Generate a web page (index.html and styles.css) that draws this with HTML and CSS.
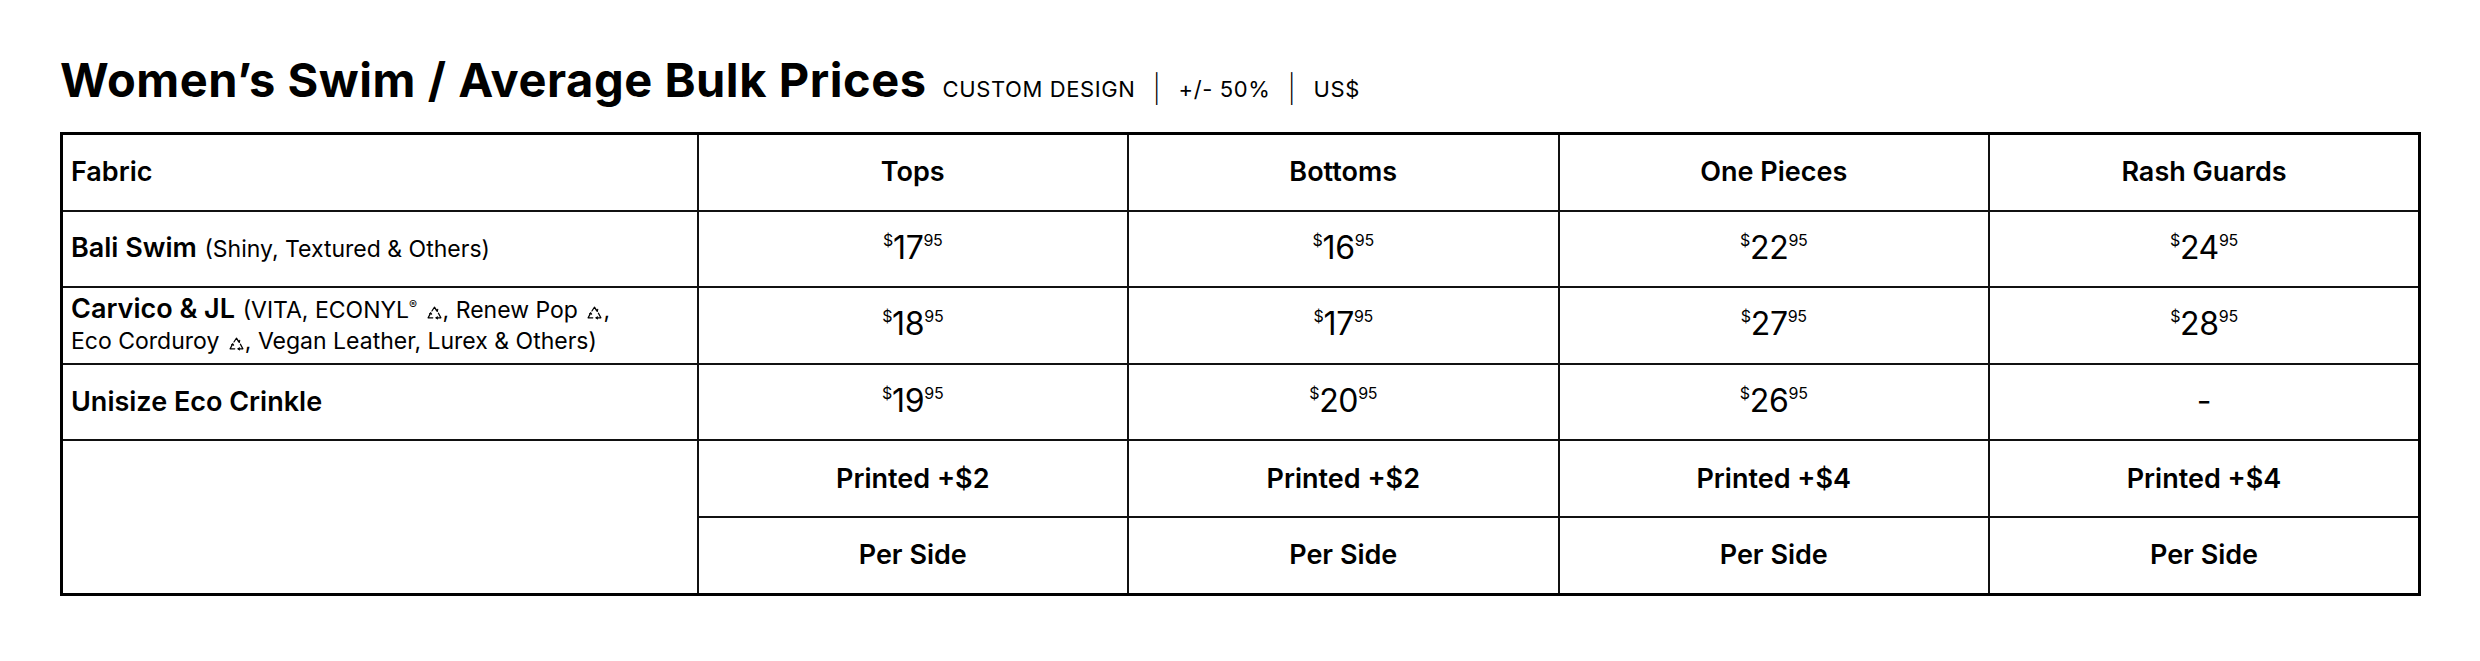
FILE: index.html
```html
<!DOCTYPE html>
<html lang="en">
<head>
<meta charset="utf-8">
<title>Women's Swim / Average Bulk Prices</title>
<link rel="stylesheet" href="styles.css">
</head>
<body>
<main class="page">
  <header class="heading">
    <h1 class="title">Women’s Swim / Average Bulk Prices</h1>
    <p class="meta">CUSTOM DESIGN <span class="sep">|</span> +/- 50% <span class="sep">|</span> US$</p>
  </header>
  <table class="prices">
    <colgroup>
      <col class="c-fabric">
      <col class="c-item">
      <col class="c-item">
      <col class="c-item">
      <col class="c-item">
    </colgroup>
    <thead>
      <tr>
        <th class="fabric">Fabric</th>
        <th>Tops</th>
        <th>Bottoms</th>
        <th>One Pieces</th>
        <th>Rash Guards</th>
      </tr>
    </thead>
    <tbody>
      <tr>
        <td class="fabric"><b>Bali Swim</b> <span class="note">(Shiny, Textured &amp; Others)</span></td>
        <td><span class="price"><sup>$</sup>17<sup>95</sup></span></td>
        <td><span class="price"><sup>$</sup>16<sup>95</sup></span></td>
        <td><span class="price"><sup>$</sup>22<sup>95</sup></span></td>
        <td><span class="price"><sup>$</sup>24<sup>95</sup></span></td>
      </tr>
      <tr>
        <td class="fabric"><b>Carvico &amp; JL</b> <span class="note">(VITA, ECONYL<sup class="reg">®</sup> <svg class="rec" viewBox="0 0 14 12" aria-hidden="true"><path d="M4.6 4.6 L7 1 L9.4 4.6 M10.6 6.6 L13 11 L8.6 11 M5.4 11 L1 11 L3.4 6.6"/><path d="M8.2 3.4 L9.6 4.9 L10 3 M9.8 11.9 L8.4 11 L9.8 10.1 M2.4 7.4 L3.4 6.4 L4.3 7.6"/></svg>, Renew Pop <svg class="rec" viewBox="0 0 14 12" aria-hidden="true"><path d="M4.6 4.6 L7 1 L9.4 4.6 M10.6 6.6 L13 11 L8.6 11 M5.4 11 L1 11 L3.4 6.6"/><path d="M8.2 3.4 L9.6 4.9 L10 3 M9.8 11.9 L8.4 11 L9.8 10.1 M2.4 7.4 L3.4 6.4 L4.3 7.6"/></svg>,<br>Eco Corduroy <svg class="rec" viewBox="0 0 14 12" aria-hidden="true"><path d="M4.6 4.6 L7 1 L9.4 4.6 M10.6 6.6 L13 11 L8.6 11 M5.4 11 L1 11 L3.4 6.6"/><path d="M8.2 3.4 L9.6 4.9 L10 3 M9.8 11.9 L8.4 11 L9.8 10.1 M2.4 7.4 L3.4 6.4 L4.3 7.6"/></svg>, Vegan Leather, Lurex &amp; Others)</span></td>
        <td><span class="price"><sup>$</sup>18<sup>95</sup></span></td>
        <td><span class="price"><sup>$</sup>17<sup>95</sup></span></td>
        <td><span class="price"><sup>$</sup>27<sup>95</sup></span></td>
        <td><span class="price"><sup>$</sup>28<sup>95</sup></span></td>
      </tr>
      <tr>
        <td class="fabric"><b>Unisize Eco Crinkle</b></td>
        <td><span class="price"><sup>$</sup>19<sup>95</sup></span></td>
        <td><span class="price"><sup>$</sup>20<sup>95</sup></span></td>
        <td><span class="price"><sup>$</sup>26<sup>95</sup></span></td>
        <td><span class="price">-</span></td>
      </tr>
      <tr class="strong">
        <td class="fabric" rowspan="2"></td>
        <td>Printed +$2</td>
        <td>Printed +$2</td>
        <td>Printed +$4</td>
        <td>Printed +$4</td>
      </tr>
      <tr class="strong">
        <td>Per Side</td>
        <td>Per Side</td>
        <td>Per Side</td>
        <td>Per Side</td>
      </tr>
    </tbody>
  </table>
</main>
</body>
</html>
```

FILE: styles.css
```css
html, body {
  margin: 0;
  padding: 0;
  background: #ffffff;
  color: #000000;
  font-family: Inter, "Liberation Sans", Arial, sans-serif;
}

.page {
  padding: 52px 0 0 60px;
}

.heading {
  display: flex;
  align-items: baseline;
  gap: 16px;
  margin: 0 0 24px 0;
}

.title {
  margin: 0;
  font-size: 47px;
  line-height: 56px;
  font-weight: 700;
  letter-spacing: 0.55px;
}

.meta {
  margin: 0;
  font-size: 22px;
  font-weight: 400;
  letter-spacing: 0.6px;
}

.sep {
  display: inline-block;
  margin: 0 11px;
  transform: scaleY(1.25);
  font-weight: 300;
}

.prices {
  border-collapse: collapse;
  table-layout: fixed;
  width: 2358px;
  border: 3px solid #000;
}

.c-fabric { width: 636px; }
.c-item { width: 430.5px; }

.prices th,
.prices td {
  border: 2px solid #111;
  height: 74.6px;
  padding: 0 8px;
  text-align: center;
  vertical-align: middle;
  font-size: 27px;
  line-height: 30px;
}

.prices th {
  font-weight: 600;
}

.prices .fabric {
  text-align: left;
}

.prices td.fabric b {
  font-weight: 600;
  font-size: 27px;
}

.note {
  font-size: 23px;
  font-weight: 400;
}

.reg {
  font-size: 12px;
  vertical-align: 9px;
  line-height: 0;
}

.rec {
  display: inline-block;
  width: 15px;
  height: 13px;
  margin: 0 1px 0 3px;
  vertical-align: -1px;
  overflow: visible;
}

.rec path {
  fill: none;
  stroke: #000;
  stroke-width: 1.1;
  stroke-linejoin: round;
  stroke-linecap: round;
}

.price {
  font-size: 32px;
  font-weight: 400;
  letter-spacing: -0.3px;
}

.price sup {
  font-size: 16px;
  vertical-align: 13px;
  line-height: 0;
  letter-spacing: -0.3px;
}

.strong td {
  font-weight: 600;
  font-size: 27px;
}
```
